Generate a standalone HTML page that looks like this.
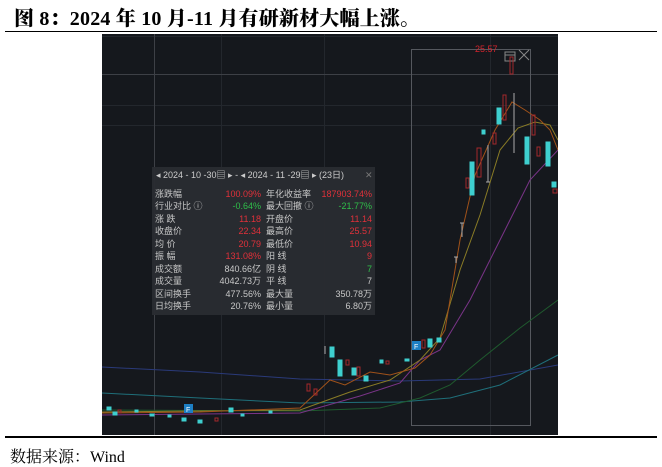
<!DOCTYPE html>
<html><head><meta charset="utf-8"><style>
html,body{margin:0;padding:0;background:#fff;width:662px;height:467px;overflow:hidden;position:relative;font-family:"Liberation Serif","Noto Serif CJK SC",serif}
.title{position:absolute;left:14px;top:2px;font-size:20px;font-weight:900;color:#000;letter-spacing:0.2px;white-space:nowrap}
.rule{position:absolute;left:5px;width:652px;height:1px;background:#000}
.src{position:absolute;left:10px;top:444px;font-size:16px;color:#000;white-space:nowrap}
svg text{font-family:"Liberation Sans","Noto Sans CJK SC",sans-serif}
</style></head><body>
<div class="title">图 8：2024 年 10 月-11 月有研新材大幅上涨。</div>
<div class="rule" style="top:31px"></div>
<svg style="position:absolute;left:102px;top:34px" width="456" height="401" viewBox="102 34 456 401">
<rect x="102" y="34" width="456" height="401" fill="#15181d"/>
<g stroke="#23272d" stroke-width="1">
<line x1="102" y1="105.5" x2="558" y2="105.5"/><line x1="102" y1="125.5" x2="558" y2="125.5"/>
<line x1="221.5" y1="34" x2="221.5" y2="435"/><line x1="324.5" y1="34" x2="324.5" y2="435"/><line x1="490.5" y1="34" x2="490.5" y2="435"/>
<line x1="102" y1="36.5" x2="558" y2="36.5"/>
</g>
<line x1="102" y1="74.5" x2="558" y2="74.5" stroke="#3d4046"/>
<line x1="154.5" y1="34" x2="154.5" y2="435" stroke="#3d4046"/>
<rect x="411.5" y="49.5" width="119" height="376" fill="none" stroke="#55585e"/>
<text x="475" y="52" font-size="9" fill="#d4242c">25.57</text>
<rect x="505" y="52" width="10" height="9" fill="none" stroke="#888"/><line x1="505" y1="55" x2="515" y2="55" stroke="#888"/>
<path d="M519 50 L529 60 M529 50 L519 60" stroke="#888" fill="none"/>
<g fill="none" stroke-width="1">
<polyline stroke="#2a3a7a" points="102,367 200,372 300,379 400,381 480,379 558,365"/>
<polyline stroke="#1f6f7a" points="102,393 200,398 300,403 400,402 450,398 500,385 558,355"/>
<polyline stroke="#1f5a2e" points="102,410 300,411 380,408 420,398 450,385 480,360 520,328 558,300"/>
<polyline stroke="#7a3488" points="102,415 200,414 300,413 360,396 400,383 420,360 440,350 470,300 500,240 530,180 558,150"/>
<polyline stroke="#8a7c26" points="102,412 200,411 300,410 350,392 390,380 420,360 440,338 460,270 480,215 500,150 518,128 535,122 550,125 558,140"/>
<polyline stroke="#a0521a" points="102,413 200,412 300,408 330,380 345,385 370,372 390,375 415,368 430,355 445,330 460,240 475,175 495,130 512,102 525,110 540,120 550,130 558,150"/>
</g>
<g>
<g fill="#3ecfcf" stroke="#3ecfcf">
<rect x="107" y="407" width="4" height="3"/><rect x="113" y="412" width="4" height="3"/><rect x="135" y="410" width="3" height="2"/><rect x="150" y="414" width="4" height="2"/><rect x="168" y="415" width="3" height="2"/><rect x="182" y="418" width="4" height="3"/><rect x="198" y="420" width="4" height="3"/><rect x="229" y="408" width="4" height="4"/><rect x="241" y="414" width="3" height="2"/><rect x="269" y="411" width="3" height="2"/>
<rect x="330" y="347" width="4" height="10"/><rect x="338" y="360" width="4" height="16"/><rect x="352" y="368" width="4" height="7"/><rect x="364" y="376" width="4" height="5"/><rect x="380" y="360" width="3" height="3"/><rect x="405" y="359" width="4" height="2"/><rect x="428" y="339" width="4" height="8"/><rect x="437" y="338" width="4" height="4"/><rect x="470" y="162" width="4" height="33"/><rect x="482" y="130" width="3" height="4"/><rect x="497" y="108" width="4" height="16"/><rect x="525" y="137" width="4" height="27"/><rect x="546" y="142" width="4" height="24"/><rect x="552" y="182" width="4" height="5"/>
</g>
<g fill="none" stroke="#a3282c">
<rect x="118" y="410" width="3" height="3"/><rect x="215" y="418" width="3" height="3"/><rect x="307" y="384" width="3" height="7"/><rect x="314" y="389" width="3" height="6"/><rect x="346" y="360" width="3" height="5"/><rect x="357" y="367" width="3" height="9"/><rect x="386" y="361" width="3" height="3"/><rect x="422" y="340" width="3" height="8"/><rect x="466" y="178" width="3" height="10"/><rect x="477" y="148" width="4" height="29"/><rect x="493" y="133" width="3" height="11"/><rect x="503" y="95" width="3" height="25"/><rect x="510" y="57" width="3" height="17"/><rect x="532" y="115" width="3" height="20"/><rect x="537" y="147" width="3" height="9"/><rect x="553" y="189" width="4" height="4"/>
</g>
<g stroke="#aaa"><line x1="456" y1="257" x2="456" y2="263"/><line x1="454" y1="257" x2="458" y2="257"/><line x1="462" y1="223" x2="462" y2="237"/><line x1="460" y1="223" x2="464" y2="223"/><line x1="488" y1="145" x2="488" y2="182"/><line x1="486" y1="182" x2="490" y2="182"/><line x1="514" y1="93" x2="514" y2="153"/><line x1="325" y1="346" x2="325" y2="354"/></g>
</g>
<rect x="184" y="404" width="9" height="9" fill="#1d7fc4"/><text x="186" y="412" font-size="7" fill="#fff">F</text>
<rect x="412" y="341" width="9" height="9" fill="#1d7fc4"/><text x="414" y="349" font-size="7" fill="#fff">F</text>
<rect x="152" y="167" width="223" height="148" fill="#2a2c31" opacity="0.96"/>
<g font-size="9">
<text x="156" y="178" fill="#ccc">◂ 2024 - 10 -30▤ ▸  -  ◂ 2024 - 11 -29▤ ▸   (23日)</text>
<text x="365" y="178" fill="#777">✕</text>
</g>
<g font-size="9" fill="#c8c8c8">
<text x="155" y="197">涨跌幅</text><text x="155" y="209">行业对比 ⓘ</text><text x="155" y="222">涨  跌</text><text x="155" y="234">收盘价</text><text x="155" y="247">均  价</text><text x="155" y="259">振  幅</text><text x="155" y="272">成交额</text><text x="155" y="284">成交量</text><text x="155" y="297">区间换手</text><text x="155" y="309">日均换手</text>
<text x="266" y="197">年化收益率</text><text x="266" y="209">最大回撤 ⓘ</text><text x="266" y="222">开盘价</text><text x="266" y="234">最高价</text><text x="266" y="247">最低价</text><text x="266" y="259">阳  线</text><text x="266" y="272">阴  线</text><text x="266" y="284">平  线</text><text x="266" y="297">最大量</text><text x="266" y="309">最小量</text>
</g>
<g font-size="9" text-anchor="end">
<text x="261" y="197" fill="#e0313a">100.09%</text><text x="261" y="209" fill="#2fbf4a">-0.64%</text><text x="261" y="222" fill="#e0313a">11.18</text><text x="261" y="234" fill="#e0313a">22.34</text><text x="261" y="247" fill="#e0313a">20.79</text><text x="261" y="259" fill="#e0313a">131.08%</text><text x="261" y="272" fill="#c8c8c8">840.66亿</text><text x="261" y="284" fill="#c8c8c8">4042.73万</text><text x="261" y="297" fill="#c8c8c8">477.56%</text><text x="261" y="309" fill="#c8c8c8">20.76%</text>
<text x="372" y="197" fill="#e0313a">187903.74%</text><text x="372" y="209" fill="#2fbf4a">-21.77%</text><text x="372" y="222" fill="#e0313a">11.14</text><text x="372" y="234" fill="#e0313a">25.57</text><text x="372" y="247" fill="#e0313a">10.94</text><text x="372" y="259" fill="#e0313a">9</text><text x="372" y="272" fill="#2fbf4a">7</text><text x="372" y="284" fill="#c8c8c8">7</text><text x="372" y="297" fill="#c8c8c8">350.78万</text><text x="372" y="309" fill="#c8c8c8">6.80万</text>
</g>
</svg>
<div class="rule" style="top:436px;height:2px"></div>
<div class="src">数据来源：Wind</div>
</body></html>
